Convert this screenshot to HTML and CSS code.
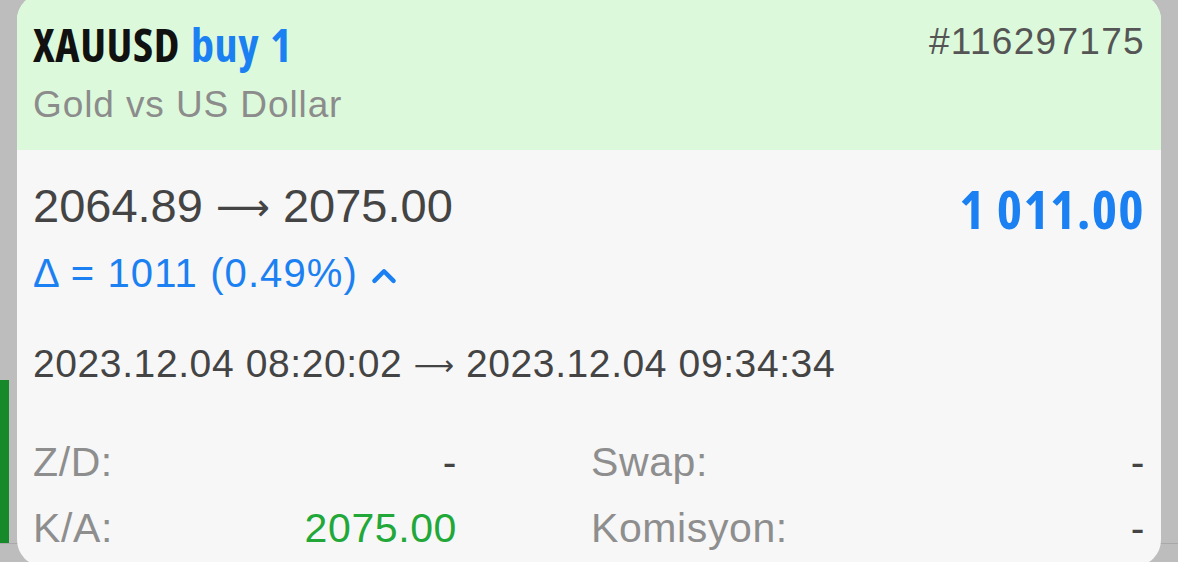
FILE: index.html
```html
<!DOCTYPE html>
<html lang="tr">
<head>
  <meta charset="UTF-8" />
  <meta name="viewport" content="width=device-width, initial-scale=1.0"/>
  <title>XAUUSD - Pozisyon</title>
  <link rel="stylesheet" href="styles.css">
</head>
<body>
  <div class="side-bar"></div>
  <div class="gutter-line"></div>

  <main class="stage">
    <section class="deal-card">
      <!-- Header -->
      <header class="deal-header">
        <div class="deal-title">
          <h1 class="symbol">XAUUSD <span class="side">buy 1</span></h1>
          <p class="description">Gold vs US Dollar</p>
        </div>
        <div class="ticket">#116297175</div>
      </header>

      <!-- Body -->
      <div class="deal-body">
        <div class="price-row">
          <div class="prices">2064.89 <span class="arrow">⟶</span> 2075.00</div>
          <div class="profit">1 011.00</div>
        </div>
        <div class="delta">
          Δ = 1011 (0.49%)
          <svg class="chevron" viewBox="0 0 24 16" width="26" height="17">
            <path d="M3 13 L12 4 L21 13" fill="none" stroke="currentColor" stroke-width="4.2" stroke-linecap="round" stroke-linejoin="round"/>
          </svg>
        </div>

        <div class="times">2023.12.04 08:20:02 <span class="arrow small">⟶</span> 2023.12.04 09:34:34</div>

        <div class="stats">
          <div class="stat">
            <span class="stat-label">Z/D:</span>
            <span class="stat-value">-</span>
          </div>
          <div class="stat">
            <span class="stat-label">Swap:</span>
            <span class="stat-value">-</span>
          </div>
          <div class="stat">
            <span class="stat-label">K/A:</span>
            <span class="stat-value positive">2075.00</span>
          </div>
          <div class="stat">
            <span class="stat-label">Komisyon:</span>
            <span class="stat-value">-</span>
          </div>
        </div>
      </div>
    </section>
  </main>
</body>
</html>
```

FILE: styles.css
```css
* { margin: 0; padding: 0; box-sizing: border-box; }

body {
  font-family: 'Liberation Sans', Arial, sans-serif;
  background-color: #bdbdbd;
  height: 562px;
  overflow: hidden;
  position: relative;
}

/* bits of the list behind the card */
.side-bar {
  position: absolute;
  left: 0;
  top: 380px;
  width: 9px;
  height: 163px;
  background-color: #168a2a;
}

.gutter-line {
  position: absolute;
  left: 0;
  right: 0;
  top: 543px;
  height: 1px;
  background-color: #a9a9a9;
}

.stage {
  position: relative;
  padding: 0 17px;
  margin-top: -6px;
}

.deal-card {
  background-color: #f7f7f7;
  border-radius: 26px;
  height: 572px;
  overflow: hidden;
}

.deal-header {
  background-color: #dcfadb;
  height: 156px;
  display: flex;
  justify-content: space-between;
  align-items: flex-start;
  padding: 22px 16px 0 16px;
}

.symbol {
  font-family: 'Open Sans', 'DejaVu Sans', sans-serif;
  font-stretch: 75%;
  font-weight: 700;
  font-size: 46px;
  line-height: 56px;
  color: #111;
  letter-spacing: 0.6px;
  word-spacing: 2px;
}

.side { color: #1b80f2; }

.description {
  font-size: 37px;
  line-height: 50px;
  color: #8c8c8c;
  letter-spacing: 0.9px;
  margin-top: 8px;
}

.ticket {
  font-size: 37px;
  line-height: 50px;
  color: #555;
  letter-spacing: 1.3px;
  margin-top: 1px;
}

.deal-body {
  padding: 26px 16px 0 16px;
}

.price-row {
  display: flex;
  justify-content: space-between;
  align-items: flex-start;
}

.prices {
  font-size: 47px;
  line-height: 60px;
  color: #444;
}

.arrow {
  font-family: 'DejaVu Sans', sans-serif;
  font-size: 0.8em;
  vertical-align: 0.06em;
}

.arrow.small {
  font-size: 0.72em;
}

.profit {
  font-family: 'Open Sans', 'DejaVu Sans', sans-serif;
  font-stretch: 75%;
  font-weight: 700;
  font-size: 54px;
  line-height: 64px;
  color: #1b80f2;
  letter-spacing: 1.3px;
}

.delta {
  font-size: 40px;
  line-height: 56px;
  color: #1b80f2;
  letter-spacing: 1.1px;
  display: flex;
  align-items: center;
  gap: 13px;
  margin-top: 5px;
}

.chevron { margin-top: 4px; }

.times {
  font-size: 39px;
  line-height: 50px;
  color: #444;
  letter-spacing: 0.6px;
  margin-top: 38px;
}

.stats {
  display: grid;
  grid-template-columns: 424px 1fr;
  column-gap: 134px;
  margin-top: 46px;
  row-gap: 16px;
}

.stat {
  display: flex;
  justify-content: space-between;
  font-size: 41px;
  line-height: 50px;
  letter-spacing: 0.6px;
}

.stat-label { color: #8e8e8e; }
.stat-value { color: #444; }
.stat-value.positive { color: #21a838; }
```
